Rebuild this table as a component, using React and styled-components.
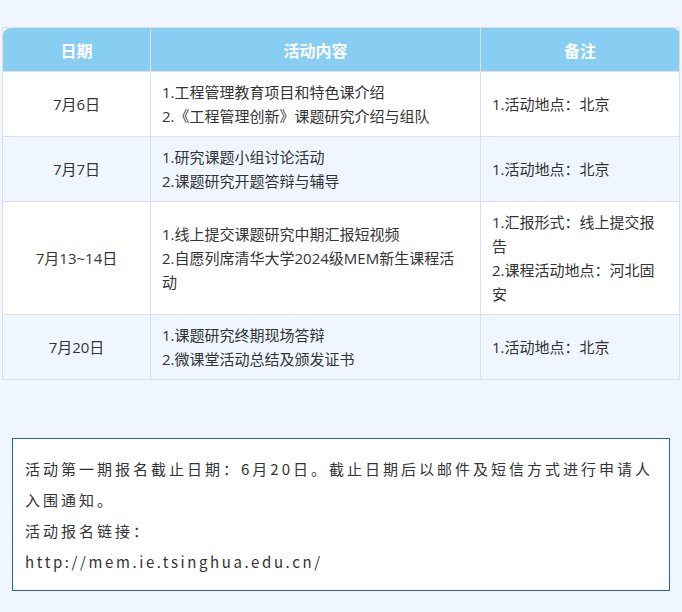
import styled, { createGlobalStyle } from 'styled-components';

const rows = [
  {
    date: '7月6日',
    content: ['1.工程管理教育项目和特色课介绍', '2.《工程管理创新》课题研究介绍与组队'],
    note: ['1.活动地点：北京'],
  },
  {
    date: '7月7日',
    content: ['1.研究课题小组讨论活动', '2.课题研究开题答辩与辅导'],
    note: ['1.活动地点：北京'],
  },
  {
    date: '7月13~14日',
    content: ['1.线上提交课题研究中期汇报短视频', '2.自愿列席清华大学2024级MEM新生课程活动'],
    note: ['1.汇报形式：线上提交报告', '2.课程活动地点：河北固安'],
  },
  {
    date: '7月20日',
    content: ['1.课题研究终期现场答辩', '2.微课堂活动总结及颁发证书'],
    note: ['1.活动地点：北京'],
  },
];

function App() {
  return (
    <>
      <GlobalStyle />
      <Page>
        <Table>
          <colgroup>
            <col style={{ width: 148 }} />
            <col style={{ width: 330 }} />
            <col style={{ width: 199 }} />
          </colgroup>
          <thead>
            <tr>
              <HeadCell $corner="left">日期</HeadCell>
              <HeadCell>活动内容</HeadCell>
              <HeadCell $corner="right">备注</HeadCell>
            </tr>
          </thead>
          <tbody>
            {rows.map((row, i) => (
              <Row key={row.date} $alt={i % 2 === 1}>
                <DateCell>{row.date}</DateCell>
                <TextCell>
                  {row.content.map((line) => (
                    <Line key={line}>{line}</Line>
                  ))}
                </TextCell>
                <TextCell>
                  {row.note.map((line) => (
                    <Line key={line}>{line}</Line>
                  ))}
                </TextCell>
              </Row>
            ))}
          </tbody>
        </Table>

        <Notice>
          <p>活动第一期报名截止日期：6月20日。截止日期后以邮件及短信方式进行申请人入围通知。</p>
          <p>活动报名链接：</p>
          <Link>http://mem.ie.tsinghua.edu.cn/</Link>
        </Notice>
      </Page>
    </>
  );
}

export default App;

const GlobalStyle = createGlobalStyle`
  html, body {
    margin: 0;
    padding: 0;
    background: #eff6ff;
  }
  body {
    font-family: "Open Sans", "Noto Sans CJK SC", sans-serif;
    color: #333;
  }
  p {
    margin: 0;
  }
`;

const Page = styled.div`
  width: 682px;
  height: 612px;
  box-sizing: border-box;
  padding: 27px 0 0 2px;
  background: #eff6ff;
  overflow: hidden;
`;

const Table = styled.table`
  width: 677px;
  border-collapse: collapse;
  table-layout: fixed;
  font-size: 15px;
  border: 1px solid #dcdfe6;
`;

const HeadCell = styled.th`
  height: 43px;
  padding: 0;
  background: #88cdf2;
  color: #fff;
  font-family: "Noto Sans CJK SC", sans-serif;
  font-size: 16px;
  font-weight: 700;
  text-align: center;
  border: 1px solid #dcdfe6;
  border-top-left-radius: ${(p) => (p.$corner === 'left' ? '8px' : '0')};
  border-top-right-radius: ${(p) => (p.$corner === 'right' ? '8px' : '0')};
`;

const Row = styled.tr`
  background: ${(p) => (p.$alt ? '#eff6ff' : '#fff')};
`;

const DateCell = styled.td`
  border: 1px solid #dcdfe6;
  text-align: center;
  line-height: 24px;
  padding: 8px 10px;
`;

const TextCell = styled.td`
  border: 1px solid #dcdfe6;
  line-height: 24px;
  padding: 8px 15px 8px 11px;
  vertical-align: middle;
`;

const Line = styled.div`
  word-break: break-all;
`;

const Notice = styled.div`
  width: 658px;
  box-sizing: border-box;
  margin: 58px 0 0 10px;
  padding: 14px 12px 13px;
  background: #fff;
  border: 1px solid #1f62b5;
  font-family: "Noto Sans CJK SC", sans-serif;
  font-size: 15px;
  letter-spacing: 3px;
  line-height: 31px;
  color: #333;
`;

const Link = styled.p`
  letter-spacing: 2.6px;
`;
